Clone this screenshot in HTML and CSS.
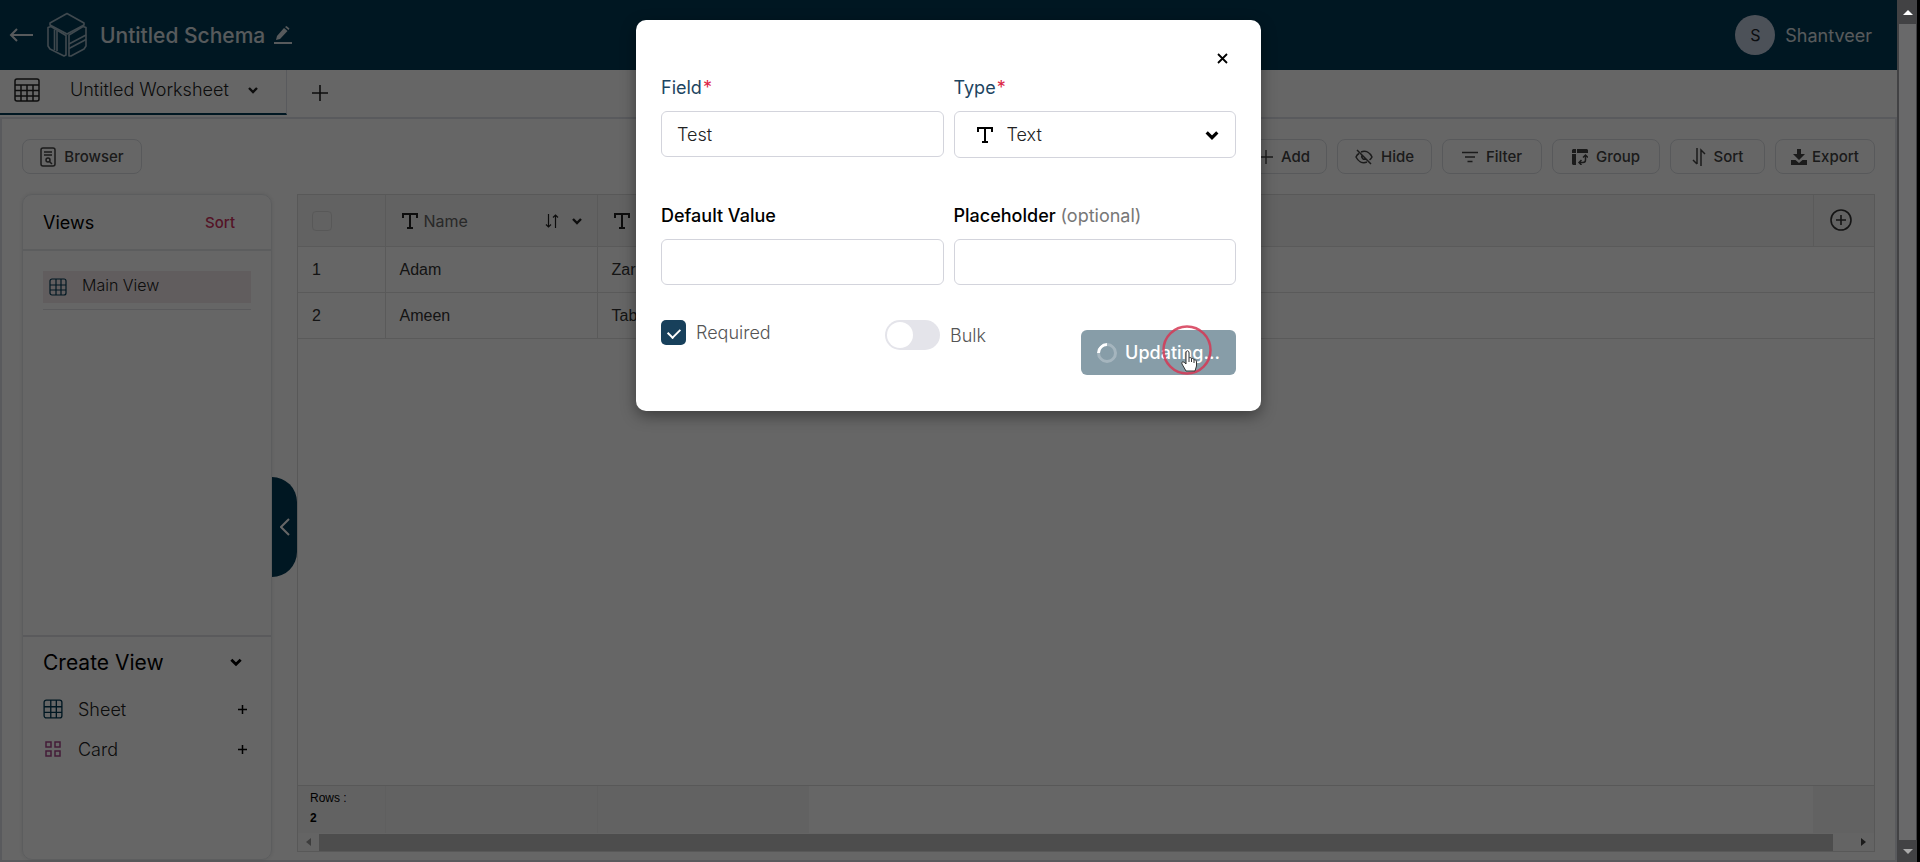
FILE: index.html
```html
<!DOCTYPE html>
<html lang="en">
<head>
    <meta charset="UTF-8">
    <meta name="viewport" content="width=device-width, initial-scale=1">
    <title>Untitled Schema</title>
    <link rel="stylesheet" href="styles.css">
</head>
<body>
<svg class="sprite" aria-hidden="true">
    <symbol id="icon-chevron" viewBox="0 0 12 12"><path d="M2 4l4 4 4-4" fill="none" stroke="currentColor" stroke-width="2.4"/></symbol>
    <symbol id="icon-plus" viewBox="0 0 16 16"><path d="M8 0v16M0 8h16" fill="none" stroke="currentColor" stroke-width="1.6"/></symbol>
    <symbol id="icon-text" viewBox="0 0 16 16"><path d="M1 5V1h14v4M8 1v14M5 15h6" fill="none" stroke="currentColor" stroke-width="2"/></symbol>
    <symbol id="icon-grid" viewBox="0 0 18 18"><path d="M3 1h12a2 2 0 0 1 2 2v12a2 2 0 0 1-2 2H3a2 2 0 0 1-2-2V3a2 2 0 0 1 2-2zM7 1v16M12 1v16M1 7h16M1 12h16" fill="none" stroke="currentColor" stroke-width="1.2"/></symbol>
</svg>

<div class="app">
    <header class="header">
        <a class="back" href="#" aria-label="Back">
            <svg width="24" height="16" viewBox="0 0 24 16" fill="none" stroke="currentColor" stroke-width="2"><path d="M24 8H2M8 2L2 8l6 6"/></svg>
        </a>
        <svg class="logo" width="40" height="46" viewBox="0 0 40 46" fill="none" stroke="currentColor" stroke-width="1.6" stroke-linejoin="round">
            <path d="M20 1.5L37 11v2L20 22 3 13v-2z"/>
            <path d="M1 15.5l3-1 15 9V43l-2 1L3 37l-2-3z"/>
            <path d="M7.5 17.5V38M10 19v20"/>
            <path d="M36 14.5l3 1V34l-2 3-13 7h-2V23z"/>
            <path d="M22 32l17-9M22 36.5l17-9"/>
        </svg>
        <h1 class="schemaName">Untitled Schema</h1>
        <button class="iconButton" aria-label="Rename schema">
            <svg width="18" height="18" viewBox="0 0 18 18" fill="currentColor"><path d="M2 14l1-4 7-8 3.500 3-7.500 8zM11 1l1.500-1 3 2.500L14.500 4zM0 16h18v2H0z"/></svg>
        </button>
        <div class="user">
            <span class="avatar">S</span>
            <span>Shantveer</span>
        </div>
    </header>

    <nav class="tabs">
        <button class="tab">
            <svg width="26" height="24" viewBox="0 0 26 24" fill="none" stroke="currentColor" stroke-width="1.5"><rect x="1" y="1" width="24" height="22" rx="2"/><path d="M1 7h24M1 12.5h24M1 18h24M7 7v16M13 7v16M19 7v16"/></svg>
            <span>Untitled Worksheet</span>
            <svg width="12" height="12"><use href="#icon-chevron"/></svg>
        </button>
        <button class="addTab" aria-label="Add worksheet">
            <svg width="16" height="16"><use href="#icon-plus"/></svg>
        </button>
    </nav>

    <main class="workspace">
        <div class="toolbar">
            <button class="toolButton browser">
                <svg width="16" height="20" viewBox="0 0 16 20" fill="none" stroke="currentColor" stroke-width="1.5"><rect x="1" y="1" width="14" height="18" rx="2"/><path d="M4 5h8M4 8h8"/><circle cx="8" cy="13" r="2"/><path d="M9 14l3 3"/></svg>
                Browser
            </button>
            <button class="toolButton add">
                <svg width="14" height="14"><use href="#icon-plus"/></svg>
                Add
            </button>
            <button class="toolButton hide">
                <svg width="18" height="16" viewBox="0 0 18 16" fill="none" stroke="currentColor" stroke-width="1.5"><path d="M2 1l14 14M6 3c5-2 9 1 11 5-.7 1.3-1.5 2.3-2.5 3M12 13c-5 2-9-1-11-5 .7-1.5 1.7-2.7 3-3.5M7 6a3 3 0 0 0 4 4"/></svg>
                Hide
            </button>
            <button class="toolButton filter">
                <svg width="16" height="12" viewBox="0 0 16 12" fill="none" stroke="currentColor" stroke-width="1.5"><path d="M0 1.5h16M3 6h10M5.5 10.5h5"/></svg>
                Filter
            </button>
            <button class="toolButton group">
                <svg width="16" height="16" viewBox="0 0 16 16" fill="currentColor"><path d="M1 0h3v4H0V1zM5 0h10l1 1v3H5zM0 5h4v11H1l-1-1z"/><path d="M13.5 6v5c0 1.5-1 2.5-2.5 2.5H7M11 8.500L13.500 6 16 8.500M9.500 11L7 13.500 9.500 16" fill="none" stroke="currentColor" stroke-width="1.5"/></svg>
                Group
            </button>
            <button class="toolButton sort">
                <svg width="14" height="18" viewBox="0 0 14 18" fill="none" stroke="currentColor" stroke-width="1.5"><path d="M5 0v16M1 12l4 4M9 18V2l4 4"/></svg>
                Sort
            </button>
            <button class="toolButton export">
                <svg width="16" height="16" viewBox="0 0 16 16" fill="currentColor"><path d="M6 0h4v5h4l-6 6-6-6h4zM0 11h4.5L8 14l3.5-3H16v5H0z"/></svg>
                Export
            </button>
        </div>

        <div class="content">
            <aside class="sidebar">
                <div class="viewsHeader">
                    <h2>Views</h2>
                    <a href="#">Sort</a>
                </div>
                <div class="viewsList">
                    <a class="view" href="#">
                        <svg width="18" height="18"><use href="#icon-grid"/></svg>
                        <span>Main View</span>
                    </a>
                </div>
                <div class="createView">
                    <div class="createHeader">
                        <h2>Create View</h2>
                        <svg width="14" height="14"><use href="#icon-chevron"/></svg>
                    </div>
                    <button class="createItem sheet">
                        <svg width="20" height="20"><use href="#icon-grid"/></svg>
                        <span>Sheet</span>
                        <svg width="9" height="9" viewBox="0 0 9 9"><path d="M4.5 0v9M0 4.5h9" stroke="currentColor" stroke-width="1.5"/></svg>
                    </button>
                    <button class="createItem card">
                        <svg width="20" height="20" viewBox="0 0 20 20" fill="none" stroke="currentColor" stroke-width="1.5"><path d="M3 3h5v5H3zM12 3h5v5h-5zM3 12h5v5H3zM12 12h5v5h-5z"/></svg>
                        <span>Card</span>
                        <svg width="9" height="9" viewBox="0 0 9 9"><path d="M4.5 0v9M0 4.5h9" stroke="currentColor" stroke-width="1.5"/></svg>
                    </button>
                </div>
            </aside>

            <button class="collapse" aria-label="Collapse sidebar">
                <svg width="10" height="18" viewBox="0 0 10 18" fill="none" stroke="currentColor" stroke-width="2"><path d="M9 1L1 9l8 8"/></svg>
            </button>

            <section class="sheetGrid">
                <table>
                    <colgroup><col class="colIndex"><col class="colField"><col class="colField"><col><col class="colAdd"></colgroup>
                    <thead>
                        <tr>
                            <th><input type="checkbox" class="selectAll" aria-label="Select all rows"></th>
                            <th>
                                <div class="fieldHead">
                                    <svg width="16" height="16"><use href="#icon-text"/></svg>
                                    <span>Name</span>
                                    <svg class="sortIcon" width="14" height="14" viewBox="0 0 14 14" fill="none" stroke="currentColor" stroke-width="1.2"><path d="M3.5 0v13M1 10.5L3.5 13 6 10.5M10.5 14V1M8 3.5L10.5 1 13 3.5"/></svg>
                                    <svg width="12" height="12"><use href="#icon-chevron"/></svg>
                                </div>
                            </th>
                            <th>
                                <div class="fieldHead">
                                    <svg width="16" height="16"><use href="#icon-text"/></svg>
                                </div>
                            </th>
                            <th></th>
                            <th class="addColumn">
                                <button class="iconButton" aria-label="Add column">
                                    <svg width="22" height="22" viewBox="0 0 22 22" fill="none" stroke="currentColor" stroke-width="1.6"><circle cx="11" cy="11" r="10"/><path d="M11 6v10M6 11h10"/></svg>
                                </button>
                            </th>
                        </tr>
                    </thead>
                    <tbody>
                        <tr><td>1</td><td>Adam</td><td>Zar</td><td colspan="2"></td></tr>
                        <tr><td>2</td><td>Ameen</td><td>Tab</td><td colspan="2"></td></tr>
                    </tbody>
                </table>
                <div class="gridFooter">
                    <div class="rowCount">Rows :<b>2</b></div>
                    <div class="summary"></div>
                    <div class="summary"></div>
                    <div class="blank"></div>
                    <div class="last"></div>
                </div>
                <div class="hScroll">
                    <span class="arrowLeft"></span>
                    <span class="hThumb"></span>
                    <span class="arrowRight"></span>
                </div>
            </section>
        </div>
    </main>

    <div class="overlay">
        <form class="modal" role="dialog" aria-label="Edit field">
            <button type="button" class="close" aria-label="Close">
                <svg width="11" height="11" viewBox="0 0 11 11"><path d="M1 1l9 9M10 1l-9 9" stroke="currentColor" stroke-width="1.8"/></svg>
            </button>
            <div class="fields">
                <div class="field required">
                    <label for="fieldName">Field<span>*</span></label>
                    <input id="fieldName" type="text" value="Test">
                </div>
                <div class="field required">
                    <label for="fieldType">Type<span>*</span></label>
                    <div class="typeSelect">
                        <svg width="16" height="16"><use href="#icon-text"/></svg>
                        <select id="fieldType"><option>Text</option></select>
                        <svg width="16" height="16"><use href="#icon-chevron"/></svg>
                    </div>
                </div>
                <div class="field">
                    <label for="defaultValue">Default Value</label>
                    <input id="defaultValue" type="text">
                </div>
                <div class="field">
                    <label for="placeholder">Placeholder <span>(optional)</span></label>
                    <input id="placeholder" type="text">
                </div>
            </div>
            <div class="actions">
                <label class="checkLabel"><input type="checkbox" class="check" checked>Required</label>
                <label class="switchLabel"><input type="checkbox" class="switch">Bulk</label>
                <button type="submit" class="update" disabled><i class="spinner"></i>Updating...</button>
            </div>
            <svg class="pointer" width="50" height="50" viewBox="0 0 50 50">
                <circle cx="25" cy="25" r="23.5" fill="none" stroke="#d53855" stroke-width="2.5" opacity=".85"/>
                <path d="M24 46l-4-7c-1-2 1-3 3-1l1 1V28c0-3 3-3 3 0v5c1-1 2.5-.5 2.5 1 1-1 2.500-.5 2.500 1 1-.7 2.500 0 2.500 2v4l-1.500 5z" fill="#fff" stroke="#333" stroke-width="1"/>
                <path d="M27 33v4M29.500 34v3M32 35v3" stroke="#333"/>
            </svg>
        </form>
    </div>
</div>

<div class="pageScroll">
    <span class="arrowUp"></span>
    <span class="pageThumb"></span>
    <span class="arrowDown"></span>
</div>
</body>
</html>
```
FILE: styles.css
```css
* {
    box-sizing: border-box;
}

body {
    margin: 0;
    display: flex;
    min-height: 100vh;
    font-family: Inter, "Open Sans", sans-serif;
    font-size: 16px;
    color: #222;
}

button, input, select {
    font: inherit;
    color: inherit;
}

button {
    background: none;
    border: none;
    padding: 0;
}

a {
    color: inherit;
    text-decoration: none;
}

h1, h2 {
    margin: 0;
    font-weight: 400;
}

svg {
    display: block;
    flex-shrink: 0;
}

.sprite {
    position: absolute;
    width: 0;
    height: 0;
}

.iconButton {
    display: block;
}

.app {
    position: relative;
    flex: 1;
    min-width: 0;
    display: flex;
    flex-direction: column;
    background: #fff;
}

/* header */
.header {
    display: flex;
    align-items: center;
    height: 70px;
    padding: 0 25px 0 9px;
    background: #023a55;
    color: #fff;
}

.schemaName, .back, .user, .header .iconButton {
    opacity: 0.85;
}

.back {
    margin-right: 14px;
}

.logo {
    color: #9fb6c4;
    margin-right: 13px;
}

.schemaName {
    font-size: 21px;
    font-weight: 500;
    margin-right: 9px;
}

.user {
    display: flex;
    align-items: center;
    gap: 10px;
    margin-left: auto;
    font-size: 18px;
}

.avatar {
    display: flex;
    align-items: center;
    justify-content: center;
    width: 40px;
    height: 40px;
    border-radius: 50%;
    background: #e0e4f5;
    color: #222;
    font-size: 16px;
}

/* worksheet tabs */
.tabs {
    display: flex;
    height: 49px;
    border-bottom: 2px solid #dfe2e8;
}

.tab {
    display: flex;
    align-items: center;
    width: 287px;
    height: 45px;
    padding: 0 27px 4px 14px;
    border-right: 1px solid #dfe2e8;
    border-bottom: 2px solid #023a55;
    font-size: 18px;
    font-weight: 300;
}

.tab span {
    margin: 0 auto 0 30px;
}

.addTab {
    padding: 0 25px 2px;
}

/* workspace */
.workspace {
    flex: 1;
    display: flex;
    flex-direction: column;
    padding: 20px 20px 0;
    border: solid #dfe2e8;
    border-width: 0 2px 2px;
}

.toolbar {
    display: flex;
    gap: 10px;
    margin-bottom: 20px;
}

.toolButton {
    display: flex;
    align-items: center;
    justify-content: center;
    gap: 8px;
    height: 35px;
    border: 1px solid #dcdfe4;
    border-radius: 8px;
    font-size: 15px;
    font-weight: 500;
    color: #444;
}

.browser {
    width: 120px;
    margin-right: auto;
}

.add {
    width: 85px;
}

.hide, .sort {
    width: 95px;
}

.filter, .export {
    width: 100px;
}

.group {
    width: 108px;
}

.export {
    gap: 5px;
}

.content {
    flex: 1;
    display: flex;
}

.sidebar {
    display: flex;
    flex-direction: column;
    width: 250px;
    border: 1px solid #e6e8ec;
    border-radius: 10px;
    box-shadow: 0 0 4px rgba(0, 0, 0, 0.1);
}

.viewsHeader {
    display: flex;
    align-items: center;
    justify-content: space-between;
    height: 56px;
    padding: 0 36px 0 20px;
    border-bottom: 2px solid #e6e8ec;
}

.viewsHeader h2 {
    font-size: 18px;
    color: #000;
}

.viewsHeader a {
    font-size: 15px;
    font-weight: 500;
    color: #d2335f;
}

.viewsList {
    flex: 1;
    padding: 20px;
}

.view {
    display: flex;
    align-items: center;
    gap: 15px;
    height: 32px;
    padding-left: 6px;
    background: #f3e9ec;
    box-shadow: 0 6px #fff, 0 7px #e0e2e6;
    font-weight: 300;
}

.view span {
    padding-bottom: 4px;
}

.view svg, .sheet svg:first-child {
    color: #023a55;
}

.createView {
    height: 224px;
    padding: 10px 20px;
    border-top: 2px solid #e0e2e6;
}

.createHeader {
    display: flex;
    align-items: center;
    justify-content: space-between;
    height: 30px;
    padding-right: 8px;
    margin-bottom: 12px;
    color: #000;
}

.createHeader h2 {
    font-size: 21px;
}

.createItem {
    display: flex;
    align-items: center;
    width: 100%;
    height: 40px;
    padding-right: 4px;
    font-size: 18px;
    font-weight: 300;
}

.createItem span {
    margin: 0 auto 0 15px;
}

.createItem svg:last-child {
    color: #000;
}

.card svg:first-child {
    color: #a8468c;
}

.collapse {
    align-self: flex-start;
    display: flex;
    align-items: center;
    justify-content: center;
    width: 25px;
    height: 100px;
    margin-top: 283px;
    border-radius: 0 25px 25px 0;
    background: #023a55;
    color: #fff;
}

/* sheet */
.sheetGrid {
    flex: 1;
    display: flex;
    flex-direction: column;
    margin-bottom: 8px;
    border: 1px solid #dcdcdc;
    color: #333;
    font-family: "Liberation Sans", Arial, sans-serif;
}

.sheetGrid table {
    width: 100%;
    table-layout: fixed;
    border-collapse: collapse;
}

.colIndex {
    width: 87px;
}

.colField {
    width: 212px;
}

.colAdd {
    width: 61px;
}

th, td {
    height: 46px;
    padding: 1px 14px 0;
    border-bottom: 1px solid #e2e2e2;
    text-align: left;
}

th {
    height: 51px;
    background: #f4f4f4;
    font-weight: 400;
}

th:nth-child(-n+2), td:nth-child(-n+2), th:nth-child(4) {
    border-right: 1px solid #e2e2e2;
}

.addColumn {
    padding: 0 16px;
}

.selectAll {
    appearance: none;
    display: block;
    width: 20px;
    height: 20px;
    margin: 0;
    border: 1px solid #ddd;
    border-radius: 4px;
}

.fieldHead {
    display: flex;
    align-items: center;
    gap: 6px;
    padding-left: 2px;
    font-family: Inter, "Open Sans", sans-serif;
    color: #222;
}

.fieldHead span {
    color: #666;
}

.sortIcon {
    margin: 0 6px 0 auto;
}

.gridFooter {
    display: flex;
    height: 48px;
    margin-top: auto;
    border-top: 1px solid #dcdcdc;
    font-size: 12px;
    color: #000;
}

.rowCount, .summary, .last {
    background: #f5f5f5;
}

.rowCount {
    width: 87px;
    padding: 2px 12px;
    line-height: 20px;
}

.rowCount b {
    display: block;
}

.summary {
    width: 212px;
    border-left: 1px solid #eee;
}

.blank {
    flex: 1;
}

.last {
    width: 61px;
}

.hScroll {
    display: flex;
    align-items: center;
    gap: 8px;
    height: 18px;
    padding: 0 8px;
    background: #fafafa;
}

.hThumb {
    flex: 1;
    height: 17px;
    margin-right: 20px;
    background: #c1c1c1;
}

.arrowLeft, .arrowRight {
    border: 4px solid transparent;
}

.arrowLeft {
    border-left-width: 0;
    border-right: 5px solid #999;
}

.arrowRight {
    border-right-width: 0;
    border-left: 5px solid #444;
}

/* edit field modal */
.overlay {
    position: absolute;
    inset: 0;
    padding-top: 20px;
    background: rgba(0, 0, 0, 0.6);
}

.modal {
    position: relative;
    width: 625px;
    height: 391px;
    margin: 0 auto;
    padding: 25px;
    border-radius: 10px;
    background: #fff;
    box-shadow: 0 5px 15px rgba(0, 0, 0, 0.4);
    font-size: 18px;
}

.close {
    display: block;
    margin: 8px 8px 8px auto;
    color: #000;
}

.fields {
    display: grid;
    grid-template-columns: 1fr 1fr;
    column-gap: 10px;
}

.field {
    height: 128px;
}

.field label {
    display: block;
    height: 39px;
    line-height: 32px;
    font-weight: 500;
    color: #000;
}

.field label span {
    font-weight: 400;
    color: #777;
}

.field.required label {
    font-weight: 400;
    color: #1d4561;
}

.field.required label span {
    margin-left: 1px;
    color: #dc2646;
}

.field input {
    width: 100%;
    height: 46px;
    padding: 0 15px;
    border: 1px solid #d3d4dc;
    border-radius: 6px;
    font-weight: 300;
}

.typeSelect {
    display: flex;
    align-items: center;
    height: 47px;
    padding: 0 15px 0 22px;
    border: 1px solid #d3d4dc;
    border-radius: 6px;
    color: #000;
}

.typeSelect select {
    appearance: none;
    flex: 1;
    padding: 0 14px;
    border: none;
    background: none;
    font-weight: 300;
    color: #222;
}

.actions {
    display: flex;
    align-items: flex-start;
    margin-top: -8px;
    color: #555;
}

.actions label {
    display: flex;
    align-items: center;
    gap: 10px;
    font-weight: 300;
}

.checkLabel {
    width: 224px;
}

.check, .switch {
    appearance: none;
    margin: 0;
}

.check {
    width: 25px;
    height: 25px;
    border-radius: 5px;
    background: #17405b;
}

.check::before {
    content: "";
    display: block;
    width: 6px;
    height: 10px;
    margin: 6px 9px;
    border: solid #fff;
    border-width: 0 2px 2px 0;
    transform: rotate(45deg);
}

.switch {
    width: 55px;
    height: 30px;
    padding: 2px;
    border-radius: 15px;
    background: #e4e4ea;
}

.switch::before {
    content: "";
    display: block;
    width: 26px;
    height: 26px;
    border-radius: 50%;
    background: #fff;
}

.update {
    display: flex;
    align-items: center;
    justify-content: center;
    gap: 8px;
    width: 155px;
    height: 45px;
    margin: 10px 0 0 auto;
    border-radius: 6px;
    background: #879da8;
    color: #fff;
    font-weight: 500;
}

.spinner {
    width: 20px;
    height: 20px;
    border: 3px solid #a5b5be;
    border-top-color: #fff;
    border-radius: 50%;
    transform: rotate(-45deg);
}

.pointer {
    position: absolute;
    right: 49px;
    bottom: 36px;
}

/* page scrollbar */
.pageScroll {
    display: flex;
    flex-direction: column;
    align-items: center;
    width: 23px;
    padding: 10px 1px 8px 2px;
    border-right: 3px solid #000;
    background: #424244;
}

.pageThumb {
    flex: 1;
    align-self: stretch;
    margin: 9px 0;
    background: #69696a;
}

.arrowUp, .arrowDown {
    border: 5px solid transparent;
}

.arrowUp {
    border-top-width: 0;
    border-bottom-color: #fff;
}

.arrowDown {
    border-bottom-width: 0;
    border-top-color: #aaa;
}
```
